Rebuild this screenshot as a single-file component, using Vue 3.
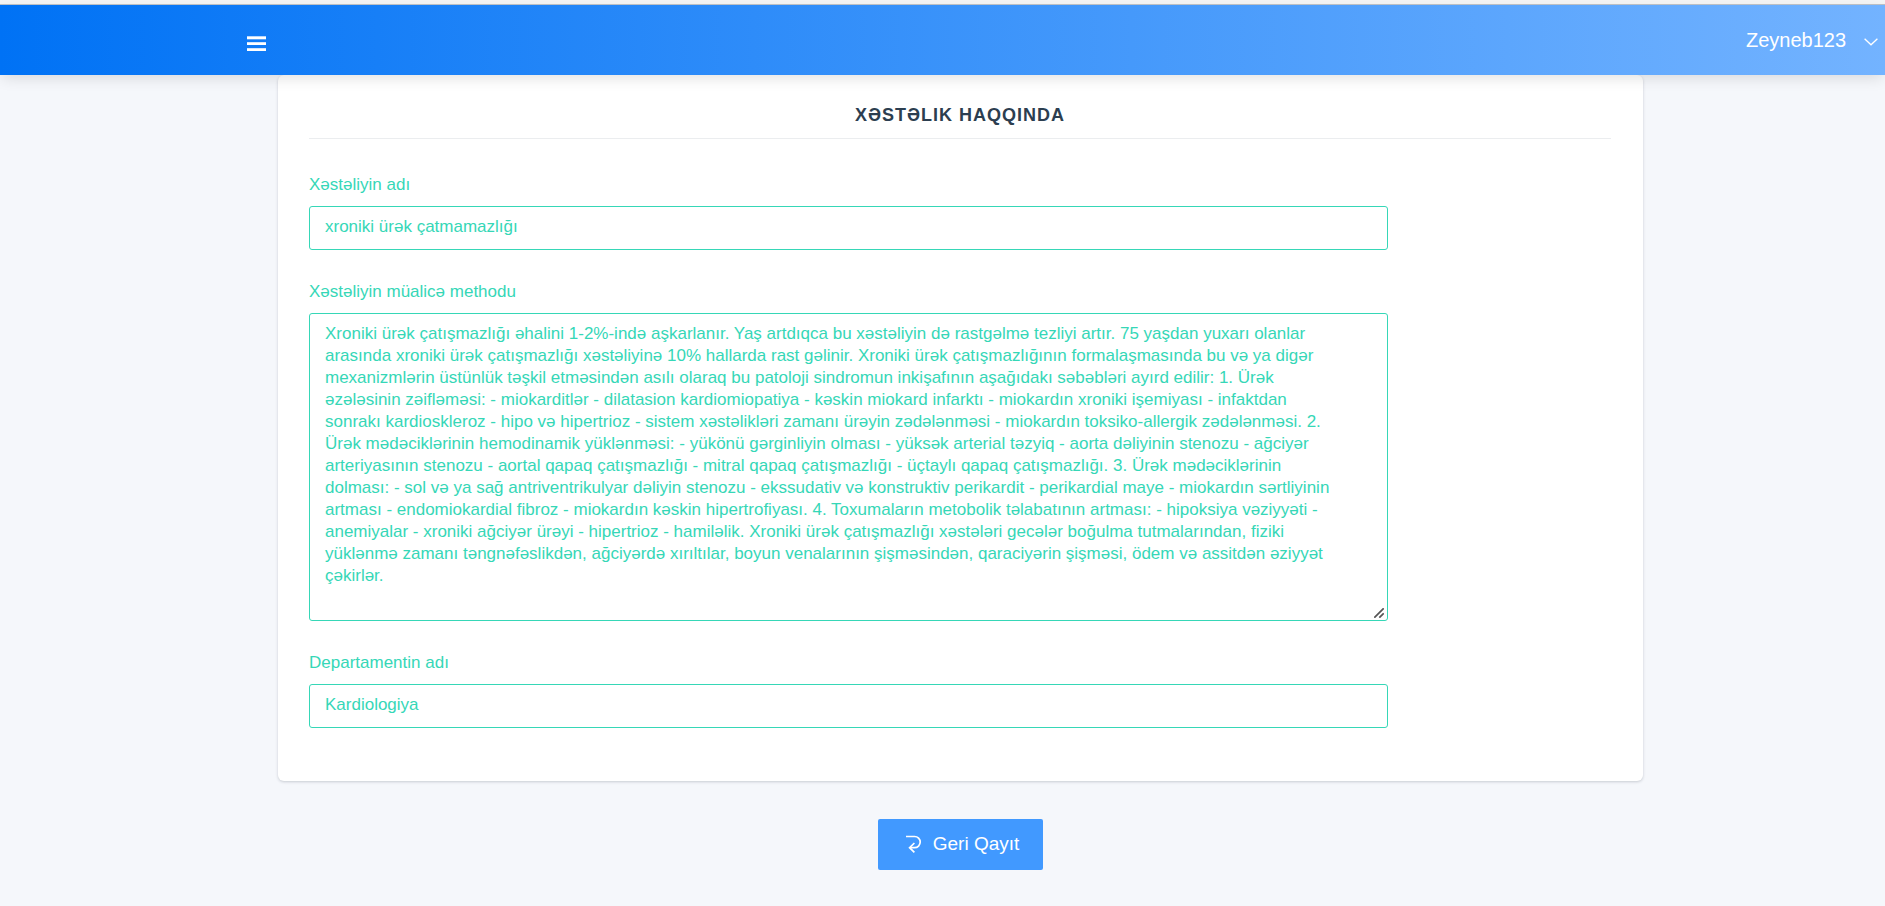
<script setup>
import { ref } from 'vue'

const name = ref('xroniki ürək çatmamazlığı')
const method = ref(
  'Xroniki ürək çatışmazlığı əhalini 1-2%-ində aşkarlanır. Yaş artdıqca bu xəstəliyin də rastgəlmə tezliyi artır. 75 yaşdan yuxarı olanlar arasında xroniki ürək çatışmazlığı xəstəliyinə 10% hallarda rast gəlinir. Xroniki ürək çatışmazlığının formalaşmasında bu və ya digər mexanizmlərin üstünlük təşkil etməsindən asılı olaraq bu patoloji sindromun inkişafının aşağıdakı səbəbləri ayırd edilir: 1. Ürək əzələsinin zəifləməsi: - miokarditlər - dilatasion kardiomiopatiya - kəskin miokard infarktı - miokardın xroniki işemiyası - infaktdan sonrakı kardioskleroz - hipo və hipertrioz - sistem xəstəlikləri zamanı ürəyin zədələnməsi - miokardın toksiko-allergik zədələnməsi. 2. Ürək mədəciklərinin hemodinamik yüklənməsi: - yükönü gərginliyin olması - yüksək arterial təzyiq - aorta dəliyinin stenozu - ağciyər arteriyasının stenozu - aortal qapaq çatışmazlığı - mitral qapaq çatışmazlığı - üçtaylı qapaq çatışmazlığı. 3. Ürək mədəciklərinin dolması: - sol və ya sağ antriventrikulyar dəliyin stenozu - ekssudativ və konstruktiv perikardit - perikardial maye - miokardın sərtliyinin artması - endomiokardial fibroz - miokardın kəskin hipertrofiyası. 4. Toxumaların metobolik təlabatının artması: - hipoksiya vəziyyəti - anemiyalar - xroniki ağciyər ürəyi - hipertrioz - hamiləlik. Xroniki ürək çatışmazlığı xəstələri gecələr boğulma tutmalarından, fiziki yüklənmə zamanı təngnəfəslikdən, ağciyərdə xırıltılar, boyun venalarının şişməsindən, qaraciyərin şişməsi, ödem və assitdən əziyyət çəkirlər.'
)
const department = ref('Kardiologiya')
</script>

<template>
  <div class="page">
    <header class="topbar">
      <button class="menu" type="button" aria-label="Menu">
        <svg width="19" height="15" viewBox="0 0 19 15" fill="#fff">
          <rect y="0.3" width="19" height="3" />
          <rect y="6.2" width="19" height="2.8" />
          <rect y="12.2" width="19" height="2.8" />
        </svg>
      </button>
      <button class="user" type="button">
        <span>Zeyneb123</span>
        <svg width="14" height="8" viewBox="0 0 14 8" fill="none" stroke="#fff" stroke-width="1.3">
          <path d="M0.6 0.8 L7 6.8 L13.4 0.8" />
        </svg>
      </button>
    </header>

    <main class="content">
      <section class="card">
        <h1 class="title">XƏSTƏLIK HAQQINDA</h1>
        <div class="field">
          <label for="name">Xəstəliyin adı</label>
          <input id="name" v-model="name" type="text" />
        </div>
        <div class="field">
          <label for="method">Xəstəliyin müalicə methodu</label>
          <div class="area">
            <textarea id="method" v-model="method" rows="13" spellcheck="false"></textarea>
            <svg class="grip" width="10" height="10" viewBox="0 0 10 10" stroke="#555" stroke-width="1.7">
              <path d="M0.3 9.7 L9.7 0.3 M5.3 9.7 L9.7 5.3" />
            </svg>
          </div>
        </div>
        <div class="field">
          <label for="department">Departamentin adı</label>
          <input id="department" v-model="department" type="text" />
        </div>
      </section>

      <button class="back" type="button">
        <svg width="16" height="18" viewBox="0 0 16 18" fill="none" stroke="#fff" stroke-width="1.7">
          <path d="M0 1.5 H8.6 A5.6 5.6 0 0 1 8.6 12.7 H4" />
          <path d="M8.4 8 L3.6 12.7 L8.4 17.3" />
        </svg>
        <span>Geri Qayıt</span>
      </button>
    </main>
  </div>
</template>

<style>
body {
  margin: 0;
  background: #f5f7fb;
}
</style>

<style scoped>
.page {
  min-height: 100vh;
  box-sizing: border-box;
  border-top: 4px solid #f5f5f5;
  background: #f5f7fb;
  font-family: "Liberation Sans", Arial, sans-serif;
}
.topbar {
  position: relative;
  z-index: 1;
  display: flex;
  align-items: center;
  justify-content: space-between;
  height: 70px;
  padding: 0 7px 0 247px;
  border-top: 1px solid #bbbfc4;
  background: linear-gradient(to right, #0072f5, #73b3ff);
  box-shadow: 0 5px 14px -2px rgba(0, 0, 0, 0.12);
}
button {
  border: 0;
  font-family: inherit;
  cursor: pointer;
}
.menu,
.user {
  display: flex;
  align-items: center;
  padding: 0;
  background: none;
  color: #fff;
}
.menu {
  padding-top: 7px;
}
.user {
  gap: 18px;
  font-size: 20px;
  line-height: 24px;
}
.user svg {
  margin-top: 3px;
}
.content {
  display: flex;
  flex-direction: column;
  align-items: center;
  padding: 0 242px 36px 278px;
}
.card {
  align-self: stretch;
  box-sizing: border-box;
  padding: 29px 32px 53px 31px;
  border-radius: 6px;
  background: #fff;
  box-shadow: 0 1px 3px rgba(40, 50, 70, 0.22);
}
.title {
  margin: 0 0 33px;
  padding-bottom: 11px;
  border-bottom: 1px solid #ebedef;
  color: #2c3e50;
  font-size: 18px;
  line-height: 23px;
  font-weight: 700;
  letter-spacing: 1px;
  text-align: center;
}
.field {
  width: calc(100% * 5 / 6 - 6px);
  color: #36d7b7;
  font-size: 17px;
}
.field + .field {
  margin-top: 29px;
}
label {
  display: block;
  margin-bottom: 8px;
  line-height: 26px;
}
input,
textarea {
  display: block;
  box-sizing: border-box;
  width: 100%;
  padding: 9px 15px 11px;
  border: 1px solid #36d7b7;
  border-radius: 3px;
  background: #fff;
  color: inherit;
  font-family: inherit;
  font-size: inherit;
  line-height: 22px;
}
.area {
  position: relative;
}
textarea {
  padding-right: 45px;
  resize: none;
}
.grip {
  position: absolute;
  right: 4px;
  bottom: 3px;
  pointer-events: none;
}
.back {
  display: flex;
  align-items: center;
  gap: 11px;
  margin-top: 38px;
  padding: 13px 24px 15px 28px;
  border-radius: 2px;
  background: #4199ff;
  color: #fff;
  font-size: 19px;
  line-height: 23px;
}
</style>
